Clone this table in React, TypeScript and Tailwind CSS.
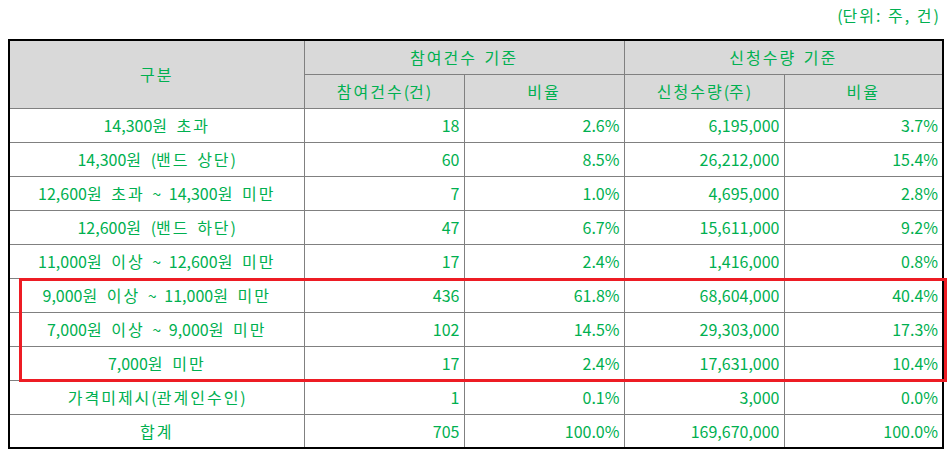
import React from 'react';

// 수요예측 참여 내역
const rows = [
  { label: "14,300원 초과", cnt: "18", cntRate: "2.6%", qty: "6,195,000", qtyRate: "3.7%" },
  { label: "14,300원 (밴드 상단)", cnt: "60", cntRate: "8.5%", qty: "26,212,000", qtyRate: "15.4%" },
  { label: "12,600원 초과 ~ 14,300원 미만", cnt: "7", cntRate: "1.0%", qty: "4,695,000", qtyRate: "2.8%" },
  { label: "12,600원 (밴드 하단)", cnt: "47", cntRate: "6.7%", qty: "15,611,000", qtyRate: "9.2%" },
  { label: "11,000원 이상 ~ 12,600원 미만", cnt: "17", cntRate: "2.4%", qty: "1,416,000", qtyRate: "0.8%" },
  { label: "9,000원 이상 ~ 11,000원 미만", cnt: "436", cntRate: "61.8%", qty: "68,604,000", qtyRate: "40.4%" },
  { label: "7,000원 이상 ~ 9,000원 미만", cnt: "102", cntRate: "14.5%", qty: "29,303,000", qtyRate: "17.3%" },
  { label: "7,000원 미만", cnt: "17", cntRate: "2.4%", qty: "17,631,000", qtyRate: "10.4%" },
  { label: "가격미제시(관계인수인)", cnt: "1", cntRate: "0.1%", qty: "3,000", qtyRate: "0.0%" },
  { label: "합계", cnt: "705", cntRate: "100.0%", qty: "169,670,000", qtyRate: "100.0%" },
];

// 한글 부분만 자간을 넓혀서 굴림체 폭에 가깝게
const K = ({ text }: { text: string }) => (
  <span className="[word-spacing:4px]">
    {text.split(/([가-힣]+)/).map((part, i) =>
      /[가-힣]/.test(part) ? (
        <span key={i} className="tracking-[2px]">{part}</span>
      ) : (
        <span key={i}>{part}</span>
      )
    )}
  </span>
);

const th = "border border-[#808080] bg-[#d9d9d9] font-normal text-center align-middle p-0";
const td = "border border-[#808080] align-middle p-0";

export default function App() {
  return (
    <div
      className="relative w-[950px] h-[457px] bg-white text-[#00b050] text-[16px] leading-none"
      style={{ fontFamily: '"Noto Sans CJK KR", "Liberation Sans", sans-serif' }}
    >
      <div className="flex justify-end pr-[11px] pt-[7px] h-[39px]">
        <K text="(단위: 주, 건)" />
      </div>

      <table className="ml-[8px] w-[934px] border-collapse border-2 border-black table-fixed">
        <colgroup>
          <col className="w-[295px]" />
          <col className="w-[160px]" />
          <col className="w-[160px]" />
          <col className="w-[160px]" />
          <col className="w-[159px]" />
        </colgroup>
        <thead>
          <tr className="h-[34px]">
            <th rowSpan={2} className={th}><K text="구분" /></th>
            <th colSpan={2} className={th}><K text="참여건수 기준" /></th>
            <th colSpan={2} className={th}><K text="신청수량 기준" /></th>
          </tr>
          <tr className="h-[34px]">
            <th className={th}><K text="참여건수(건)" /></th>
            <th className={th}><K text="비율" /></th>
            <th className={th}><K text="신청수량(주)" /></th>
            <th className={th}><K text="비율" /></th>
          </tr>
        </thead>
        <tbody>
          {rows.map((r) => (
            <tr key={r.label} className="h-[34px]">
              <td className={`${td} text-center`}><K text={r.label} /></td>
              <td className={`${td} text-right pr-[4px]`}>{r.cnt}</td>
              <td className={`${td} text-right pr-[4px]`}>{r.cntRate}</td>
              <td className={`${td} text-right pr-[4px]`}>{r.qty}</td>
              <td className={`${td} text-right pr-[4px]`}>{r.qtyRate}</td>
            </tr>
          ))}
        </tbody>
      </table>

      {/* 강조 박스 */}
      <div className="absolute left-[19px] top-[278px] w-[928px] h-[104px] border-[3px] border-[#ed1c24] pointer-events-none" />
    </div>
  );
}
